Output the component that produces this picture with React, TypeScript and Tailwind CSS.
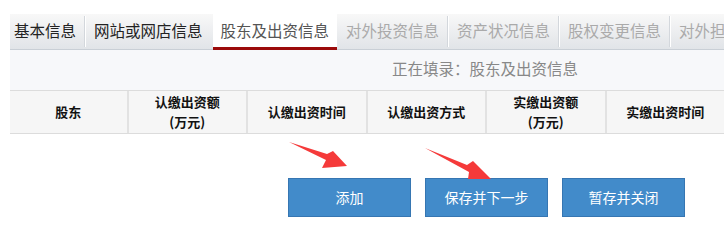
import React from 'react'

const tabs = [
  { label: '基本信息', state: 'done' },
  { label: '网站或网店信息', state: 'done' },
  { label: '股东及出资信息', state: 'active' },
  { label: '对外投资信息', state: 'todo' },
  { label: '资产状况信息', state: 'todo' },
  { label: '股权变更信息', state: 'todo' },
  { label: '对外担保信息', state: 'todo' },
]

const cols = [
  ['股东'],
  ['认缴出资额', '(万元)'],
  ['认缴出资时间'],
  ['认缴出资方式'],
  ['实缴出资额', '(万元)'],
  ['实缴出资时间'],
]

function Arrows() {
  return (
    <svg className="absolute left-0 top-0 pointer-events-none" width="724" height="243">
      <polygon points="289,142 327,154 333,151 347,166 322,168 326,160" fill="#f53a3a" />
      <polygon points="425,148 467,165 473,161 491,179 468,179 469,172" fill="#f53a3a" />
    </svg>
  )
}

export default function App() {
  return (
    <div className="relative w-[724px] h-[243px] overflow-hidden bg-white pt-[14px] pl-[10px] font-['Noto_Sans_CJK_SC','Noto_Sans',sans-serif]">
      <div className="flex h-[36px] bg-gradient-to-b from-[#f8f8f8] to-[#e1e4e8] border-b border-[#c9cfd6] whitespace-nowrap">
        {tabs.map((t, i) => (
          <div key={t.label} className="flex">
            {i > 0 && t.state !== 'active' && tabs[i - 1].state !== 'active' && (
              <div className="w-[2px] my-[2px] border-l border-[#d3d7dc] bg-white" />
            )}
            <div
              className={`flex items-start pt-[6px] text-[15.5px] leading-[20px] ${
                t.state === 'active'
                  ? 'bg-white text-[#555] px-[8px] border-b-[3px] border-[#9b0a0a] -mb-[1px] ml-[2px] mr-[1px]'
                  : t.state === 'done'
                  ? `text-[#222] px-[4px] ${i === 0 ? 'ml-0 mr-[4px]' : 'mx-[4px]'}`
                  : 'text-[#aaa] px-[4px] mx-[4px]'
              }`}
            >
              {t.label}
            </div>
          </div>
        ))}
      </div>
      <div className="h-[40px] bg-[#f7f8fa] flex items-center pl-[382px] pb-[2px] text-[15.5px] text-[#888]">
        正在填录：股东及出资信息
      </div>
      <div className="flex h-[44px] bg-[#f6f6f6] border-t border-b border-[#dcdcdc] text-[13px] font-bold text-[#111] leading-[20px]">
        {cols.map((c, i) => (
          <div
            key={i}
            className={`flex flex-col items-center justify-center ${i === 0 ? 'w-[117px]' : 'w-[120px] border-l-2 border-[#e2e2e2]'}`}
          >
            {c.map(line => (
              <span key={line}>{line}</span>
            ))}
          </div>
        ))}
      </div>
      <div className="flex gap-[14px] pl-[278px] pt-[44px]">
        {['添加', '保存并下一步', '暂存并关闭'].map(b => (
          <button
            key={b}
            className="w-[123px] h-[39px] bg-[#428bca] border border-[#3676b2] text-white text-[14px] flex items-center justify-center"
          >
            {b}
          </button>
        ))}
      </div>
      <Arrows />
    </div>
  )
}
